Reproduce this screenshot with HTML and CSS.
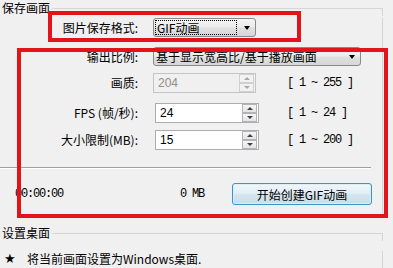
FILE: index.html
```html
<!DOCTYPE html>
<html lang="zh-CN">
<head>
<meta charset="utf-8">
<title>保存画面</title>
<link rel="stylesheet" href="styles.css">
</head>
<body>
<div class="page">
  <section class="group g-save">
    <div class="group-head"><span class="group-title">保存画面</span><span class="group-line"></span></div>
    <div class="group-body">
      <div class="row r-format">
        <span class="lbl">图片保存格式:</span>
        <div class="combo combo-format"><span class="combo-text">GIF动画</span><span class="combo-arrow"></span></div>
      </div>
      <div class="row r-ratio">
        <span class="lbl">输出比例:</span>
        <div class="combo combo-ratio"><span class="combo-text">基于显示宽高比/基于播放画面</span><span class="combo-arrow"></span></div>
      </div>
      <div class="row row-num r-quality">
        <span class="lbl">画质:</span>
        <div class="spin spin-q disabled"><span class="spin-val">204</span><span class="spin-btns"><i class="up"></i><i class="down"></i></span></div>
        <span class="range">[ 1 ~ 255 ]</span>
      </div>
      <div class="row row-num r-fps">
        <span class="lbl">FPS (帧/秒):</span>
        <div class="spin"><span class="spin-val">24</span><span class="spin-btns"><i class="up"></i><i class="down"></i></span></div>
        <span class="range">[ 1 ~ 24 ]</span>
      </div>
      <div class="row row-num r-size">
        <span class="lbl">大小限制(MB):</span>
        <div class="spin"><span class="spin-val">15</span><span class="spin-btns"><i class="up"></i><i class="down"></i></span></div>
        <span class="range">[ 1 ~ 200 ]</span>
      </div>
      <div class="sep"></div>
      <div class="status-row">
        <span class="time">00:00:00</span>
        <span class="size">0 MB</span>
        <button class="btn-create" type="button">开始创建GIF动画</button>
      </div>
    </div>
  </section>
  <section class="group g-desk">
    <div class="group-head"><span class="group-title">设置桌面</span><span class="group-line"></span></div>
    <div class="group-body">
      <div class="desk-row"><span class="star">★</span><span class="desk-text">将当前画面设置为Windows桌面.</span></div>
    </div>
  </section>
  <div class="mark mark-1"></div>
  <div class="mark mark-2"></div>
</div>
</body>
</html>
```

FILE: styles.css
```css
* { box-sizing: border-box; }
html, body { margin: 0; padding: 0; }
body {
  width: 393px;
  height: 268px;
  overflow: hidden;
  background: #f0f0f0;
  font-family: "Noto Sans CJK SC", "Liberation Sans", sans-serif;
  font-size: 12px;
  color: #000;
}
.page { position: relative; width: 393px; height: 268px; overflow: hidden; }

.group { width: 383px; }
.group-head { display: flex; height: 16px; line-height: 16px; }
.group-title { padding: 0 2px; white-space: nowrap; }
.group-line {
  flex: 1;
  margin-top: 8px;
  border-top: 1px solid #d6d6d6;
  border-right: 1px solid #d6d6d6;
}
.group-body { border-right: 1px solid #d6d6d6; }
.g-save .group-body { padding-bottom: 11px; }
.g-desk { margin-top: 9px; }
.g-desk .group-body { height: 27px; }

.row { display: flex; align-items: center; }
.lbl {
  width: 141px;
  flex: none;
  text-align: right;
  padding-right: 3px;
  white-space: nowrap;
  line-height: 16px;
}
.r-format { margin-top: 2px; height: 19px; }
.r-ratio { margin-top: 10px; height: 19px; }
.r-quality { margin-top: 7px; height: 20px; }
.r-fps { margin-top: 10px; height: 20px; }
.r-size { margin-top: 7px; height: 20px; }

.row-num { display: grid; grid-template-columns: 141px 146px auto; align-items: center; }

.combo {
  margin-left: 12px;
  height: 19px;
  display: flex;
  align-items: center;
  border: 1px solid #8a8a8a;
  border-radius: 3px;
  background: linear-gradient(#f4f4f4, #ececec 45%, #e0e0e0 55%, #d6d6d6);
  padding: 0 5px 0 1px;
}
.combo-format { width: 103px; }
.combo-ratio { width: 208px; }
.combo-text { flex: 1; line-height: 15px; padding-left: 1px; white-space: nowrap; }
.combo-format .combo-text {
  flex: none;
  width: 82px;
  outline: 1px dotted #000;
  outline-offset: -1px;
  padding-left: 2px;
}
.combo-arrow {
  margin-left: auto;
  width: 0;
  height: 0;
  border-left: 3.5px solid transparent;
  border-right: 3.5px solid transparent;
  border-top: 4px solid #000;
}

.spin {
  margin-left: 14px;
  width: 104px;
  height: 20px;
  display: flex;
  align-items: center;
  border: 1px solid #abadb3;
  background: #fff;
  padding: 0 1px 0 4px;
  font-family: "Liberation Sans", sans-serif;
}
.spin-q { margin-left: 12px; width: 103px; }
.spin.disabled { background: #f0f0f0; border-color: #c4c4c4; color: #8e8e8e; }
.spin-val { flex: 1; line-height: 16px; }
.spin-btns { display: flex; flex-direction: column; width: 15px; height: 18px; }
.spin-btns i {
  flex: 1;
  display: flex;
  align-items: center;
  justify-content: center;
  border: 1px solid #b4b4b4;
  background: linear-gradient(#f6f6f6, #e4e4e4);
}
.spin-btns i::before {
  content: "";
  border-left: 3px solid transparent;
  border-right: 3px solid transparent;
  border-bottom: 3px solid #404040;
}
.spin-btns i.down::before { border-bottom: 0; border-top: 3px solid #404040; }
.spin.disabled .spin-btns i { border-color: #d0d0d0; background: #f2f2f2; }
.spin.disabled .spin-btns i::before { border-bottom-color: #a8a8a8; }
.spin.disabled .spin-btns i.down::before { border-top-color: #a8a8a8; }

.range,
.time,
.size {
  font-family: "Liberation Mono", "DejaVu Sans Mono", monospace;
  font-size: 12px;
  letter-spacing: -1.2px;
  white-space: pre;
}

.sep {
  margin-top: 17px;
  width: 371px;
  height: 2px;
  border-top: 1px solid #a0a0a0;
  border-bottom: 1px solid #fff;
}

.status-row {
  margin-top: 14px;
  height: 22px;
  display: grid;
  grid-template-columns: 180px 52px 140px;
  align-items: center;
}
.time { padding-left: 15px; }
.btn-create {
  height: 22px;
  margin: 0;
  padding: 0;
  font-family: "Noto Sans CJK SC", sans-serif;
  font-size: 12px;
  color: #000;
  border: 1px solid #3a94cf;
  border-radius: 3px;
  background: linear-gradient(#f1f7fb, #e3eef5 45%, #d4e5ef 55%, #c9dde9);
  box-shadow: inset 0 0 0 1px #d7effc;
}

.desk-row { margin-top: 10px; display: flex; align-items: center; line-height: 16px; }
.star { width: 27px; padding-left: 4px; font-size: 13px; font-family: "DejaVu Sans", sans-serif; }

.mark {
  position: absolute;
  border: 4px solid #e2131b;
}
.mark-1 { left: 48px; top: 11px; width: 253px; height: 31px; }
.mark-2 { left: 17px; top: 48px; width: 371px; height: 170px; }
```
